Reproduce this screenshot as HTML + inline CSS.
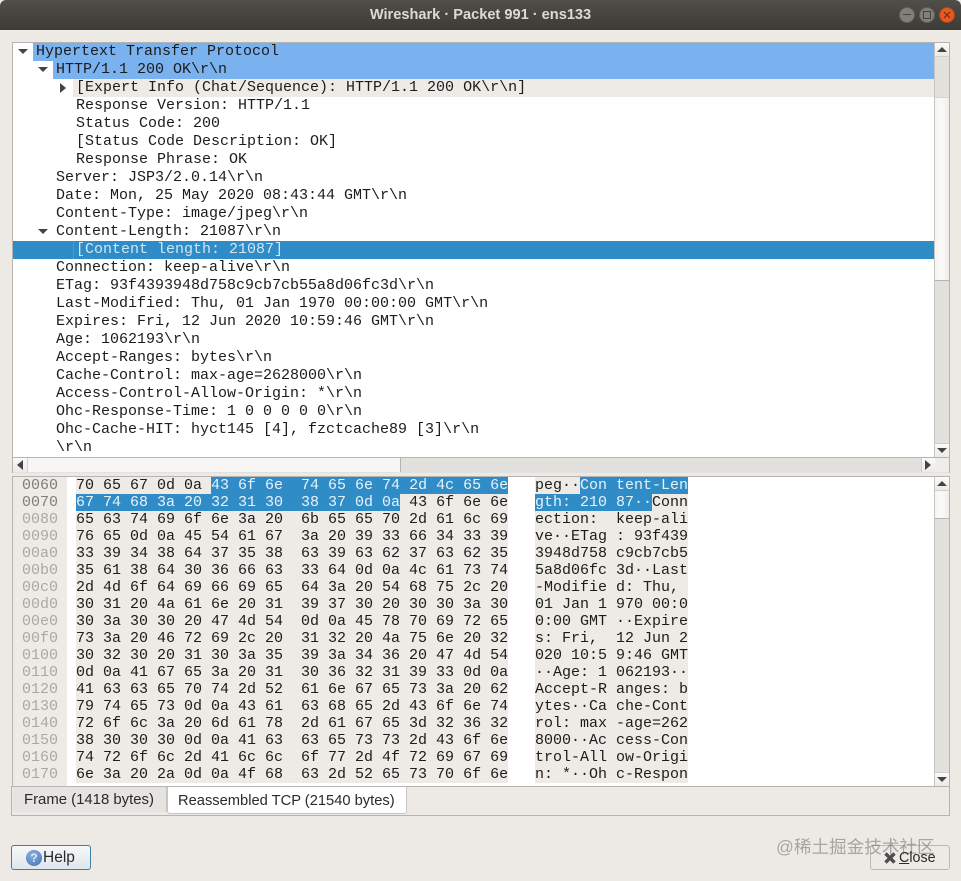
<!DOCTYPE html>
<html><head><meta charset="utf-8"><title>Wireshark · Packet 991 · ens133</title>
<style>
html,body{margin:0;padding:0;background:#edeae6;}
body{position:relative;width:961px;height:881px;overflow:hidden;font-family:"Liberation Sans",sans-serif;}
.a{position:absolute;box-sizing:border-box;}
.t{position:absolute;font:15px/18px "Liberation Mono",monospace;white-space:pre;color:#1c1c1c;height:18px;}
.h{position:absolute;font:15px/17px "Liberation Mono",monospace;white-space:pre;color:#1c1c1c;height:17px;}
.sel{background:#308cc6;color:#e6f2fa;}
.tri{position:absolute;width:0;height:0;}
.d{border-left:5px solid transparent;border-right:5px solid transparent;border-top:5px solid #444;}
.r{border-top:5px solid transparent;border-bottom:5px solid transparent;border-left:6px solid #444;}
.btn{background:linear-gradient(#fafafa,#eceae7);}
.trough{background:#e2e1de;}
.thumb{background:linear-gradient(90deg,#f6f5f3,#faf9f8 50%,#efedea);}
.up{border-left:5px solid transparent;border-right:5px solid transparent;border-bottom:5px solid #444;}
</style></head><body>

<div class="a" style="left:0;top:0;width:961px;height:30px;background:linear-gradient(#504e49,#3c3b36);border-radius:6px 6px 0 0;"></div>
<div class="a" style="left:0;top:6px;width:961px;text-align:center;color:#dfdbd2;font-size:14.6px;font-weight:bold;line-height:18px;">Wireshark · Packet 991 · ens133</div>
<div class="a" style="left:899px;top:7px;width:16px;height:16px;border-radius:50%;background:#807f78;border:1px solid #5f5e58;"></div>
<div class="a" style="left:903px;top:14px;width:8px;height:1px;background:#45443f;"></div>
<div class="a" style="left:919px;top:7px;width:16px;height:16px;border-radius:50%;background:#807f78;border:1px solid #5f5e58;"></div>
<div class="a" style="left:923px;top:11px;width:8px;height:8px;border:1px solid #45443f;"></div>
<div class="a" style="left:939px;top:7px;width:16px;height:16px;border-radius:50%;background:#e9591f;border:1px solid #9d4a25;"></div>
<svg class="a" style="left:943px;top:11px" width="8" height="8"><path d="M1 1L7 7M7 1L1 7" stroke="#6b3215" stroke-width="1.2"/></svg>

<div class="a" style="left:12px;top:42px;width:938px;height:431px;background:#fff;border:1px solid #b5b4b0;"></div>
<div class="a" style="left:33px;top:43px;width:901px;height:18px;background:#7ab2f0;"></div>
<div class="a" style="left:53px;top:61px;width:881px;height:18px;background:#7ab2f0;"></div>
<div class="a" style="left:73px;top:79px;width:861px;height:18px;background:#eeebe7;"></div>
<div class="a" style="left:13px;top:241px;width:921px;height:18px;background:#308cc6;"></div>
<div class="a" style="left:73px;top:241px;width:1px;height:18px;background:#4a9ad0;"></div>

<div class="tri d" style="left:18px;top:49px"></div>
<div class="tri d" style="left:38px;top:67px"></div>
<div class="tri r" style="left:60px;top:83px"></div>
<div class="tri d" style="left:38px;top:229px"></div>

<div class="t" style="left:36px;top:43px">Hypertext Transfer Protocol</div>
<div class="t" style="left:56px;top:61px">HTTP/1.1 200 OK\r\n</div>
<div class="t" style="left:76px;top:79px">[Expert Info (Chat/Sequence): HTTP/1.1 200 OK\r\n]</div>
<div class="t" style="left:76px;top:97px">Response Version: HTTP/1.1</div>
<div class="t" style="left:76px;top:115px">Status Code: 200</div>
<div class="t" style="left:76px;top:133px">[Status Code Description: OK]</div>
<div class="t" style="left:76px;top:151px">Response Phrase: OK</div>
<div class="t" style="left:56px;top:169px">Server: JSP3/2.0.14\r\n</div>
<div class="t" style="left:56px;top:187px">Date: Mon, 25 May 2020 08:43:44 GMT\r\n</div>
<div class="t" style="left:56px;top:205px">Content-Type: image/jpeg\r\n</div>
<div class="t" style="left:56px;top:223px">Content-Length: 21087\r\n</div>
<div class="t" style="left:76px;top:241px;color:#cfe5f5">[Content length: 21087]</div>
<div class="t" style="left:56px;top:259px">Connection: keep-alive\r\n</div>
<div class="t" style="left:56px;top:277px">ETag: 93f4393948d758c9cb7cb55a8d06fc3d\r\n</div>
<div class="t" style="left:56px;top:295px">Last-Modified: Thu, 01 Jan 1970 00:00:00 GMT\r\n</div>
<div class="t" style="left:56px;top:313px">Expires: Fri, 12 Jun 2020 10:59:46 GMT\r\n</div>
<div class="t" style="left:56px;top:331px">Age: 1062193\r\n</div>
<div class="t" style="left:56px;top:349px">Accept-Ranges: bytes\r\n</div>
<div class="t" style="left:56px;top:367px">Cache-Control: max-age=2628000\r\n</div>
<div class="t" style="left:56px;top:385px">Access-Control-Allow-Origin: *\r\n</div>
<div class="t" style="left:56px;top:403px">Ohc-Response-Time: 1 0 0 0 0 0\r\n</div>
<div class="t" style="left:56px;top:421px">Ohc-Cache-HIT: hyct145 [4], fzctcache89 [3]\r\n</div>
<div class="t" style="left:56px;top:439px">\r\n</div>

<!-- top vertical scrollbar -->
<div class="a trough" style="left:934px;top:43px;width:15px;height:415px;border-left:1px solid #c6c5c1;"></div>
<div class="a thumb" style="left:935px;top:97px;width:14px;height:184px;border-bottom:1px solid #b5b4b0;border-top:1px solid #d5d4d0;"></div>
<div class="a btn" style="left:935px;top:43px;width:14px;height:14px;border-bottom:1px solid #d0cfcb;"></div>
<div class="tri up" style="left:936.5px;top:47px"></div>
<div class="a btn" style="left:935px;top:443px;width:14px;height:15px;border-top:1px solid #d0cfcb;"></div>
<div class="tri d" style="left:936.5px;top:448px"></div>

<!-- horizontal scrollbar -->
<div class="a trough" style="left:13px;top:457px;width:936px;height:16px;border-top:1px solid #b5b4b0;"></div>
<div class="a" style="left:27px;top:458px;width:374px;height:14px;background:#f7f6f4;border-left:1px solid #d5d4d0;border-right:1px solid #b5b4b0;"></div>
<div class="a btn" style="left:13px;top:458px;width:14px;height:14px;"></div>
<div class="tri" style="left:17px;top:460px;border-top:5px solid transparent;border-bottom:5px solid transparent;border-right:6px solid #444;"></div>
<div class="a btn" style="left:921px;top:458px;width:14px;height:14px;border-left:1px solid #d0cfcb;"></div>
<div class="tri r" style="left:925px;top:460px"></div>
<div class="a" style="left:935px;top:458px;width:14px;height:14px;background:#eeedea;"></div>

<!-- hex pane -->
<div class="a" style="left:12px;top:476px;width:938px;height:311px;background:#fff;border:1px solid #b5b4b0;"></div>
<div class="a" style="left:13px;top:477px;width:54px;height:309px;background:#eeebe7;"></div>
<div class="a" style="left:76px;top:477px;width:432px;height:306px;background:#eeebe7;"></div>
<div class="a" style="left:535px;top:477px;width:153px;height:306px;background:#eeebe7;"></div>

<div class="h" style="left:22px;top:477px;color:#7f7d7a;height:34px">0060
0070</div>
<div class="h" style="left:22px;top:511px;color:#aaa8a5;height:272px">0080
0090
00a0
00b0
00c0
00d0
00e0
00f0
0100
0110
0120
0130
0140
0150
0160
0170</div>

<div class="h" style="left:76px;top:477px;height:34px"><span>70 65 67 0d 0a </span><span class="sel">43 6f 6e  74 65 6e 74 2d 4c 65 6e</span>
<span class="sel">67 74 68 3a 20 32 31 30  38 37 0d 0a</span> 43 6f 6e 6e</div>
<div class="h" style="left:76px;top:511px;height:272px">65 63 74 69 6f 6e 3a 20  6b 65 65 70 2d 61 6c 69
76 65 0d 0a 45 54 61 67  3a 20 39 33 66 34 33 39
33 39 34 38 64 37 35 38  63 39 63 62 37 63 62 35
35 61 38 64 30 36 66 63  33 64 0d 0a 4c 61 73 74
2d 4d 6f 64 69 66 69 65  64 3a 20 54 68 75 2c 20
30 31 20 4a 61 6e 20 31  39 37 30 20 30 30 3a 30
30 3a 30 30 20 47 4d 54  0d 0a 45 78 70 69 72 65
73 3a 20 46 72 69 2c 20  31 32 20 4a 75 6e 20 32
30 32 30 20 31 30 3a 35  39 3a 34 36 20 47 4d 54
0d 0a 41 67 65 3a 20 31  30 36 32 31 39 33 0d 0a
41 63 63 65 70 74 2d 52  61 6e 67 65 73 3a 20 62
79 74 65 73 0d 0a 43 61  63 68 65 2d 43 6f 6e 74
72 6f 6c 3a 20 6d 61 78  2d 61 67 65 3d 32 36 32
38 30 30 30 0d 0a 41 63  63 65 73 73 2d 43 6f 6e
74 72 6f 6c 2d 41 6c 6c  6f 77 2d 4f 72 69 67 69
6e 3a 20 2a 0d 0a 4f 68  63 2d 52 65 73 70 6f 6e</div>

<div class="h" style="left:535px;top:477px;height:34px">peg··<span class="sel">Con tent-Len</span>
<span class="sel">gth: 210 87··</span>Conn</div>
<div class="h" style="left:535px;top:511px;height:272px">ection:  keep-ali
ve··ETag : 93f439
3948d758 c9cb7cb5
5a8d06fc 3d··Last
-Modifie d: Thu, 
01 Jan 1 970 00:0
0:00 GMT ··Expire
s: Fri,  12 Jun 2
020 10:5 9:46 GMT
··Age: 1 062193··
Accept-R anges: b
ytes··Ca che-Cont
rol: max -age=262
8000··Ac cess-Con
trol-All ow-Origi
n: *··Oh c-Respon</div>

<!-- hex scrollbar -->
<div class="a trough" style="left:934px;top:477px;width:15px;height:309px;border-left:1px solid #c6c5c1;"></div>
<div class="a thumb" style="left:935px;top:491px;width:14px;height:28px;border-bottom:1px solid #b5b4b0;"></div>
<div class="a btn" style="left:935px;top:477px;width:14px;height:14px;border-bottom:1px solid #d0cfcb;"></div>
<div class="tri up" style="left:936.5px;top:481px"></div>
<div class="a btn" style="left:935px;top:772px;width:14px;height:14px;border-top:1px solid #d0cfcb;"></div>
<div class="tri d" style="left:936.5px;top:777px"></div>

<!-- tabs -->
<div class="a" style="left:11px;top:786px;width:939px;height:30px;border:1px solid #b5b4b0;"></div>
<div class="a" style="left:13px;top:787px;width:154px;height:25px;background:#e6e4e0;border-right:1px solid #c8c7c3;"></div>
<div class="a" style="left:24px;top:790px;font-size:14.9px;line-height:20px;color:#2a2a2a;white-space:nowrap;">Frame (1418 bytes)</div>
<div class="a" style="left:167px;top:787px;width:240px;height:27px;background:#fff;border:1px solid #c8c7c3;border-top:none;border-radius:0 0 3px 3px;"></div>
<div class="a" style="left:178px;top:791px;font-size:14.7px;line-height:20px;color:#2a2a2a;white-space:nowrap;">Reassembled TCP (21540 bytes)</div>

<!-- help button -->
<div class="a" style="left:11px;top:845px;width:80px;height:25px;border:1px solid #3f7fa8;border-radius:3px;background:linear-gradient(#f6f8fa,#dfe6ec);"></div>
<div class="a" style="left:26px;top:850px;width:16px;height:16px;border-radius:50%;background:radial-gradient(circle at 40% 30%,#8db1de,#3e6fb4);color:#dce8f5;font-size:12px;font-weight:bold;line-height:16px;text-align:center;">?</div>
<div class="a" style="left:43px;top:848px;font-size:15.5px;line-height:20px;color:#2a2a2a;">Help</div>

<!-- close button -->
<div class="a" style="left:870px;top:845px;width:80px;height:25px;border:1px solid #bbb9b5;border-radius:3px;"></div>

<!-- watermark -->
<div class="a" style="left:776px;top:835px;font-family:'Liberation Sans','Noto Sans CJK SC',sans-serif;font-size:17.6px;line-height:24px;color:rgba(120,118,115,.6);white-space:nowrap;">@稀土掘金技术社区</div>

<svg class="a" style="left:883px;top:851px" width="14" height="14"><path d="M2.5 2.5L11.5 11.5M11.5 2.5L2.5 11.5" stroke="#4d4d4b" stroke-width="3.4"/></svg>
<div class="a" style="left:899px;top:848px;font-size:14.3px;line-height:20px;color:#2a2a2a;"><span style="text-decoration:underline">C</span>lose</div>

</body></html>
